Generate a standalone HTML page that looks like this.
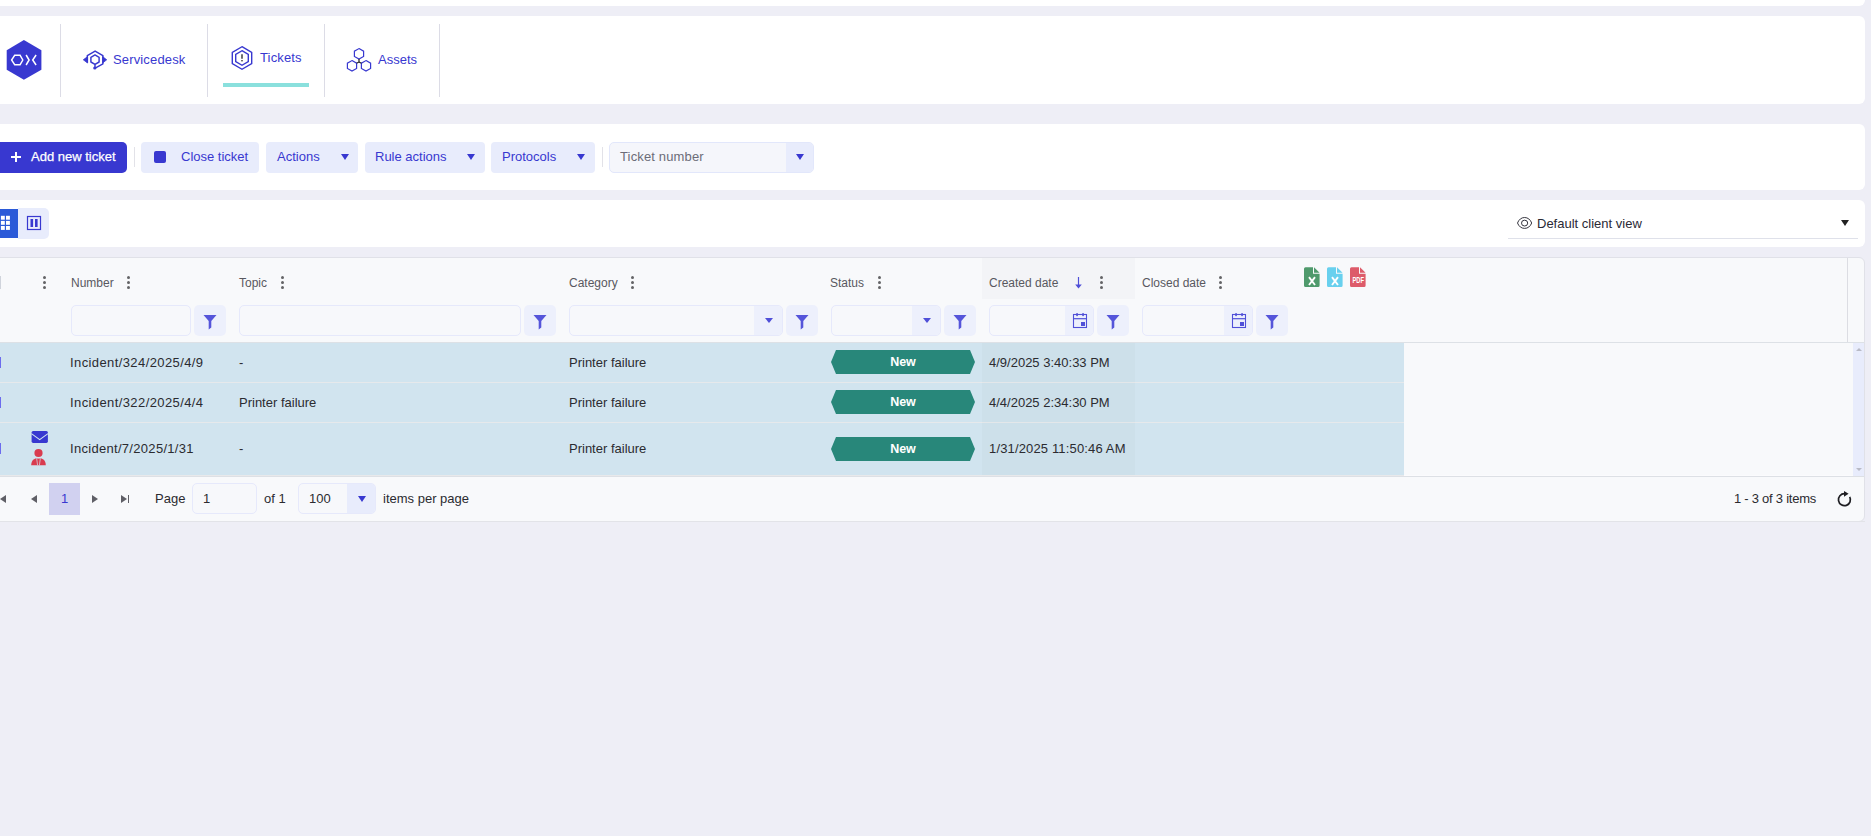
<!DOCTYPE html>
<html><head><meta charset="utf-8">
<style>
*{box-sizing:border-box;margin:0;padding:0}
html,body{width:1871px;height:836px;overflow:hidden;background:#eeeef6;font-family:"Liberation Sans",sans-serif;}
.a{position:absolute}
.card{position:absolute;background:#fff;border-radius:6px}
.t{position:absolute;white-space:nowrap;line-height:1;font-size:13px}
.p{color:#3838d0}
.sep{position:absolute;width:1px;background:#dcdce6}
.btn{position:absolute;background:#e8ecfc;border-radius:4px;height:31px;top:142px}
.arr{position:absolute;width:0;height:0;border-left:4px solid transparent;border-right:4px solid transparent;border-top:6px solid #3838d0}
.kb{position:absolute;width:3px}
.kb i{display:block;width:3px;height:3px;border-radius:50%;background:#636366;margin-bottom:2px}
.h{position:absolute;white-space:nowrap;line-height:1;font-size:12px;color:#58585f}
.inp{position:absolute;top:305px;height:31px;border:1px solid #e6e9fb;border-radius:5px;background:#f7f8fb;overflow:hidden}
.inp .dd{position:absolute;right:0;top:0;bottom:0;background:#edf0fc}
.fb{position:absolute;top:305px;height:31px;width:32px;border-radius:5px;background:#edf0fc}
.row{position:absolute;left:0;width:1404px;background:#d1e4ef}
.c{position:absolute;white-space:nowrap;line-height:1;font-size:13px;color:#2b2b30}
.badge{position:absolute;left:831px;width:144px;height:24px;background:#28877a;clip-path:polygon(5px 0,139px 0,144px 12px,139px 24px,5px 24px,0 12px);color:#fff;font-weight:bold;font-size:12.5px;line-height:24px;text-align:center}
</style></head><body>
<!-- top strip -->
<div class="card" style="left:-10px;top:-10px;width:1875px;height:16px"></div>
<!-- nav card -->
<div class="card" style="left:-10px;top:16px;width:1875px;height:88px"></div>
<svg class="a" style="left:0;top:36px" width="48" height="48" viewBox="0 36 48 48">
  <polygon points="23.9,40.1 41.4,50.2 41.4,69.8 23.9,79.8 6.7,69.8 6.7,50.2" fill="#3838d0"/>
  <polygon points="11.6,60 14.7,55.3 20.1,55.3 22.8,60 20.1,64.7 14.7,64.7" fill="none" stroke="#fff" stroke-width="1.4"/>
  <polyline points="26.1,55 29.1,60 26.1,65" fill="none" stroke="#fff" stroke-width="1.5"/>
  <polyline points="36.1,55 32.7,60 36.1,65" fill="none" stroke="#fff" stroke-width="1.5"/>
</svg>
<div class="sep" style="left:60px;top:24px;height:73px"></div>
<svg class="a" style="left:80px;top:46px" width="30" height="28" viewBox="80 46 30 28" fill="none" stroke="#3838d0" stroke-width="1.45" stroke-linejoin="round">
  <polyline points="87.3,62.6 87.3,55.6 95.1,51.1 102.9,55.6 102.9,63.9 95.2,68.1"/>
  <polygon points="95,54.9 99.1,57.3 99.1,62 95,64.4 90.9,62 90.9,57.3"/>
  <line x1="95" y1="64.4" x2="95" y2="67.4"/>
  <polygon points="83.3,59.8 87.6,56.6 87.6,63" fill="#3838d0" stroke-width="0.8"/>
  <polygon points="106.7,59.8 102.6,56.6 102.6,63" fill="#3838d0" stroke-width="0.8"/>
  <circle cx="94.8" cy="68" r="1.6" fill="#3838d0" stroke="none"/>
</svg>
<div class="t p" style="left:113px;top:53px;letter-spacing:0.15px">Servicedesk</div>
<div class="sep" style="left:207px;top:24px;height:73px"></div>
<svg class="a" style="left:228px;top:44px" width="30" height="30" viewBox="228 44 30 30" fill="none" stroke="#3838d0" stroke-width="1.4">
  <polygon points="242,46.7 251.7,52.3 251.7,63.7 242,69.3 232.3,63.7 232.3,52.3"/>
  <polygon points="242,50.7 248.3,54.35 248.3,61.65 242,65.3 235.7,61.65 235.7,54.35"/>
  <line x1="242" y1="54.3" x2="242" y2="58.8" stroke="#333" stroke-width="1.4"/>
  <rect x="241.3" y="60" width="1.4" height="1.4" fill="#333" stroke="none"/>
</svg>
<div class="t p" style="left:260px;top:51px;letter-spacing:0.15px">Tickets</div>
<div class="a" style="left:223px;top:83px;width:86px;height:4px;background:#8ae0dd"></div>
<div class="sep" style="left:324px;top:24px;height:73px"></div>
<svg class="a" style="left:344px;top:44px" width="32" height="32" viewBox="344 44 32 32" fill="none" stroke="#3838d0" stroke-width="1.2">
  <polygon points="359,48.6 363.6,51.2 363.6,56.4 359,59 354.4,56.4 354.4,51.2"/>
  <polygon points="352,60.6 356.6,63.2 356.6,68.4 352,71 347.4,68.4 347.4,63.2"/>
  <polygon points="366,60.6 370.6,63.2 370.6,68.4 366,71 361.4,68.4 361.4,63.2"/>
  <polyline points="359,59 359,62 356.6,63.2" stroke="#222"/>
  <line x1="359" y1="62" x2="361.4" y2="63.2" stroke="#222"/>
</svg>
<div class="t p" style="left:378px;top:53px">Assets</div>
<div class="sep" style="left:439px;top:24px;height:73px"></div>

<!-- toolbar card -->
<div class="card" style="left:-10px;top:124px;width:1875px;height:66px"></div>
<div class="a" style="left:-6px;top:142px;width:133px;height:31px;background:#3838d0;border-radius:5px"></div>
<svg class="a" style="left:10px;top:151px" width="12" height="12"><path d="M6 1V11M1 6H11" stroke="#fff" stroke-width="2"/></svg>
<div class="t" style="left:31px;top:150px;color:#fff;-webkit-text-stroke:0.25px #fff">Add new ticket</div>
<div class="sep" style="left:134px;top:147px;height:20px;background:#e2e2e8"></div>
<div class="btn" style="left:141px;width:118px"></div>
<div class="a" style="left:154px;top:151px;width:12px;height:12px;background:#3838d0;border-radius:2px"></div>
<div class="t p" style="left:181px;top:150px">Close ticket</div>
<div class="btn" style="left:266px;width:92px"></div>
<div class="t p" style="left:277px;top:150px">Actions</div>
<div class="arr" style="left:341px;top:154px"></div>
<div class="btn" style="left:365px;width:120px"></div>
<div class="t p" style="left:375px;top:150px">Rule actions</div>
<div class="arr" style="left:467px;top:154px"></div>
<div class="btn" style="left:491px;width:104px"></div>
<div class="t p" style="left:502px;top:150px">Protocols</div>
<div class="arr" style="left:577px;top:154px"></div>
<div class="sep" style="left:602px;top:147px;height:20px;background:#e2e2e8"></div>
<div class="a" style="left:609px;top:142px;width:205px;height:31px;border:1px solid #e2e7fb;border-radius:5px;background:#f5f6fb;overflow:hidden">
  <div class="a" style="right:0;top:0;bottom:0;width:27px;background:#e8ecfc"></div>
</div>
<div class="t" style="left:620px;top:150px;color:#6c6c78;letter-spacing:0.15px">Ticket number</div>
<div class="arr" style="left:796px;top:154px"></div>

<!-- view card -->
<div class="card" style="left:-10px;top:200px;width:1875px;height:47px"></div>
<div class="a" style="left:-10px;top:209px;width:28px;height:29px;background:#2b5ad8"></div>
<svg class="a" style="left:0;top:214px" width="12" height="18" viewBox="0 214 12 18" fill="#fff">
  <rect x="0.9" y="215.8" width="3.9" height="3.9"/><rect x="6" y="215.8" width="3.9" height="3.9"/>
  <rect x="0.9" y="220.9" width="3.9" height="3.9"/><rect x="6" y="220.9" width="3.9" height="3.9"/>
  <rect x="0.9" y="226" width="3.9" height="3.9"/><rect x="6" y="226" width="3.9" height="3.9"/>
</svg>
<div class="a" style="left:18px;top:208px;width:31px;height:31px;background:#e8ecfc;border-radius:0 5px 5px 0"></div>
<svg class="a" style="left:26px;top:215px" width="16" height="16">
  <rect x="1.5" y="1.5" width="13" height="13" fill="none" stroke="#3838d0" stroke-width="1.2"/>
  <rect x="4.5" y="4" width="2.6" height="8" fill="#3838d0"/><rect x="9" y="4" width="2.6" height="8" fill="#3838d0"/>
</svg>
<svg class="a" style="left:1514px;top:214px" width="22" height="18" viewBox="1514 214 22 18">
  <path d="M1517.5 223C1518.8 219.6 1521.4 217.5 1524.6 217.5S1530.4 219.6 1531.7 223C1530.4 226.4 1527.8 228.4 1524.6 228.4S1518.8 226.4 1517.5 223Z" fill="none" stroke="#2a2a35" stroke-width="0.95"/>
  <ellipse cx="1524.6" cy="223.1" rx="3.1" ry="2.9" fill="none" stroke="#2a2a35" stroke-width="0.95"/>
</svg>
<div class="t" style="left:1537px;top:217px;color:#2a2a35">Default client view</div>
<div class="arr" style="left:1841px;top:220px;border-top-color:#222"></div>
<div class="a" style="left:1508px;top:238px;width:350px;height:1px;background:#dfe1ea"></div>

<!-- table -->
<div class="a" style="left:-10px;top:257px;width:1875px;height:265px;background:#f8f9fb;border:1px solid #e0e1e8;border-radius:6px;overflow:hidden"></div>
<!-- header -->
<div class="a" style="left:982px;top:258px;width:153px;height:41px;background:#f3f4f7"></div>
<div class="a" style="left:0;top:276px;width:1px;height:13px;background:#d0d4dc"></div>
<div class="kb" style="left:43px;top:276px"><i></i><i></i><i></i></div>
<div class="h" style="left:71px;top:277px">Number</div>
<div class="kb" style="left:127px;top:276px"><i></i><i></i><i></i></div>
<div class="h" style="left:239px;top:277px">Topic</div>
<div class="kb" style="left:281px;top:276px"><i></i><i></i><i></i></div>
<div class="h" style="left:569px;top:277px">Category</div>
<div class="kb" style="left:631px;top:276px"><i></i><i></i><i></i></div>
<div class="h" style="left:830px;top:277px">Status</div>
<div class="kb" style="left:878px;top:276px"><i></i><i></i><i></i></div>
<div class="h" style="left:989px;top:277px">Created date</div>
<svg class="a" style="left:1074px;top:276px" width="10" height="14"><path d="M4.5 1V11" stroke="#4f4fd8" stroke-width="1.2"/><path d="M1.2 8.5L4.5 12.5L7.8 8.5Z" fill="#4f4fd8"/></svg>
<div class="kb" style="left:1100px;top:276px"><i></i><i></i><i></i></div>
<div class="h" style="left:1142px;top:277px">Closed date</div>
<div class="kb" style="left:1219px;top:276px"><i></i><i></i><i></i></div>
<!-- export icons -->
<svg class="a" style="left:1303px;top:266px" width="66" height="23">
  <g fill="#4f9a6c"><path d="M2.5 1.2H10V7.8H16.6V19.5Q16.6 21 15.1 21H2.5Q1 21 1 19.5V2.7Q1 1.2 2.5 1.2Z"/><path d="M11 1.2L16.6 6.8H11Z"/></g>
  <g fill="#68d0ee"><path d="M25.5 1.2H33V7.8H39.6V19.5Q39.6 21 38.1 21H25.5Q24 21 24 19.5V2.7Q24 1.2 25.5 1.2Z"/><path d="M34 1.2L39.6 6.8H34Z"/></g>
  <g fill="#dd5b6a"><path d="M48.5 1.2H56V7.8H62.6V19.5Q62.6 21 61.1 21H48.5Q47 21 47 19.5V2.7Q47 1.2 48.5 1.2Z"/><path d="M57 1.2L62.6 6.8H57Z"/></g>
  <path d="M6 11.2L12 19M12 11.2L6 19" stroke="#fff" stroke-width="1.9"/>
  <path d="M29 11.2L35 19M35 11.2L29 19" stroke="#fff" stroke-width="1.9"/>
  <text x="49.5" y="16.7" font-family="Liberation Sans" font-weight="bold" font-size="8.6" fill="#fff" textLength="11.5" lengthAdjust="spacingAndGlyphs">PDF</text>
</svg>
<div class="a" style="left:1847px;top:258px;width:1px;height:84px;background:#dcdde3"></div>
<!-- filter row -->
<div class="inp" style="left:71px;width:120px"></div>
<div class="fb" style="left:194px"></div>
<div class="inp" style="left:239px;width:282px"></div>
<div class="fb" style="left:524px"></div>
<div class="inp" style="left:569px;width:214px"><div class="dd" style="width:28px"></div></div>
<div class="arr" style="left:765px;top:318px;border-left-width:4px;border-right-width:4px;border-top-width:5px;border-top-color:#4f4fd8"></div>
<div class="fb" style="left:786px"></div>
<div class="inp" style="left:831px;width:110px"><div class="dd" style="width:28px"></div></div>
<div class="arr" style="left:923px;top:318px;border-left-width:4px;border-right-width:4px;border-top-width:5px;border-top-color:#4f4fd8"></div>
<div class="fb" style="left:944px"></div>
<div class="inp" style="left:989px;width:105px"><div class="dd" style="width:28px"></div></div>
<div class="fb" style="left:1097px"></div>
<div class="inp" style="left:1142px;width:111px"><div class="dd" style="width:28px"></div></div>
<div class="fb" style="left:1256px"></div>
<svg class="a" style="left:203px;top:314px" width="14" height="16"><path d="M0.5 1H13.5L8.3 7V13.5L5.7 15.5V7Z" fill="#5555da"/></svg>
<svg class="a" style="left:533px;top:314px" width="14" height="16"><path d="M0.5 1H13.5L8.3 7V13.5L5.7 15.5V7Z" fill="#5555da"/></svg>
<svg class="a" style="left:795px;top:314px" width="14" height="16"><path d="M0.5 1H13.5L8.3 7V13.5L5.7 15.5V7Z" fill="#5555da"/></svg>
<svg class="a" style="left:953px;top:314px" width="14" height="16"><path d="M0.5 1H13.5L8.3 7V13.5L5.7 15.5V7Z" fill="#5555da"/></svg>
<svg class="a" style="left:1106px;top:314px" width="14" height="16"><path d="M0.5 1H13.5L8.3 7V13.5L5.7 15.5V7Z" fill="#5555da"/></svg>
<svg class="a" style="left:1265px;top:314px" width="14" height="16"><path d="M0.5 1H13.5L8.3 7V13.5L5.7 15.5V7Z" fill="#5555da"/></svg>
<svg class="a" style="left:1072px;top:312px" width="16" height="17"><rect x="1.5" y="2.5" width="13" height="13" fill="none" stroke="#5050d8" stroke-width="1.1"/><path d="M1.5 6.7H14.5" stroke="#5050d8" stroke-width="1.2"/><rect x="4.2" y="1" width="1.7" height="3.2" rx="0.8" fill="#5050d8"/><rect x="10.2" y="1" width="1.7" height="3.2" rx="0.8" fill="#5050d8"/><rect x="9" y="10" width="4" height="4" fill="#5050d8"/></svg>
<svg class="a" style="left:1231px;top:312px" width="16" height="17"><rect x="1.5" y="2.5" width="13" height="13" fill="none" stroke="#5050d8" stroke-width="1.1"/><path d="M1.5 6.7H14.5" stroke="#5050d8" stroke-width="1.2"/><rect x="4.2" y="1" width="1.7" height="3.2" rx="0.8" fill="#5050d8"/><rect x="10.2" y="1" width="1.7" height="3.2" rx="0.8" fill="#5050d8"/><rect x="9" y="10" width="4" height="4" fill="#5050d8"/></svg>

<div class="a" style="left:0;top:342px;width:1864px;height:1px;background:#dde1e6"></div>
<!-- rows -->
<div class="row" style="top:343px;height:39px"></div>
<div class="a" style="left:0;top:382px;width:1404px;height:1px;background:#e6e9ec"></div>
<div class="row" style="top:383px;height:39px"></div>
<div class="a" style="left:0;top:422px;width:1404px;height:1px;background:#e6e9ec"></div>
<div class="row" style="top:423px;height:52px"></div>
<div class="a" style="left:982px;top:343px;width:153px;height:132px;background:#cde0ea"></div>
<div class="a" style="left:982px;top:382px;width:153px;height:1px;background:#e3e7ea"></div>
<div class="a" style="left:982px;top:422px;width:153px;height:1px;background:#e3e7ea"></div>
<div class="a" style="left:1853px;top:343px;width:11px;height:133px;background:#e8ecfc"></div>
<div class="a" style="left:1856px;top:348px;width:0;height:0;border-left:3px solid transparent;border-right:3px solid transparent;border-bottom:3px solid #b8bac6"></div>
<div class="a" style="left:1856px;top:468px;width:0;height:0;border-left:3px solid transparent;border-right:3px solid transparent;border-top:3px solid #b8bac6"></div>
<div class="a" style="left:0;top:357px;width:1px;height:11px;background:#6c6cee"></div>
<div class="a" style="left:0;top:397px;width:1px;height:11px;background:#6c6cee"></div>
<div class="a" style="left:0;top:443px;width:1px;height:11px;background:#6c6cee"></div>
<div class="c" style="left:70px;top:356px;letter-spacing:0.4px">Incident/324/2025/4/9</div>
<div class="c" style="left:239px;top:356px">-</div>
<div class="c" style="left:569px;top:356px">Printer failure</div>
<div class="badge" style="top:350px">New</div>
<div class="c" style="left:989px;top:356px">4/9/2025 3:40:33 PM</div>
<div class="c" style="left:70px;top:396px;letter-spacing:0.4px">Incident/322/2025/4/4</div>
<div class="c" style="left:239px;top:396px">Printer failure</div>
<div class="c" style="left:569px;top:396px">Printer failure</div>
<div class="badge" style="top:390px">New</div>
<div class="c" style="left:989px;top:396px">4/4/2025 2:34:30 PM</div>
<svg class="a" style="left:28px;top:428px" width="22" height="40" viewBox="28 428 22 40">
  <rect x="31.6" y="431" width="16.3" height="11.9" rx="1.6" fill="#3838d0"/>
  <path d="M31.4 433.6L39.7 439.6L48 433.6" fill="none" stroke="#d1e4ef" stroke-width="1.1"/>
  <circle cx="38.5" cy="453" r="4.1" fill="#d93b4f"/>
  <path d="M31.2 465.2C31.2 461 33.6 458.6 36.6 458.2H40.4C43.4 458.6 45.8 461 45.8 465.2Z" fill="#d93b4f"/>
  <path d="M36.6 458.2L37.6 465.2M40.4 458.2L39.4 465.2" stroke="#d1e4ef" stroke-width="0.7" fill="none"/>
  <path d="M37.2 458.4H39.8" stroke="#d1e4ef" stroke-width="0.5"/>
</svg>
<div class="c" style="left:70px;top:442px;letter-spacing:0.3px">Incident/7/2025/1/31</div>
<div class="c" style="left:239px;top:442px">-</div>
<div class="c" style="left:569px;top:442px">Printer failure</div>
<div class="badge" style="top:437px">New</div>
<div class="c" style="left:989px;top:442px;letter-spacing:0.15px">1/31/2025 11:50:46 AM</div>
<!-- pager -->
<div class="a" style="left:0;top:475px;width:1404px;height:1px;background:#e8e9eb"></div><div class="a" style="left:1404px;top:475px;width:449px;height:1px;background:#fbfbfd"></div><div class="a" style="left:0;top:476px;width:1864px;height:1px;background:#dde0e5"></div>
<div class="a" style="left:0;top:521px;width:1865px;height:1px;background:#e2e3e8"></div>
<div class="a" style="left:0;top:495px;width:0;height:0;border-top:4px solid transparent;border-bottom:4px solid transparent;border-right:6px solid #5f5f66"></div>
<div class="a" style="left:31px;top:495px;width:0;height:0;border-top:4px solid transparent;border-bottom:4px solid transparent;border-right:6px solid #5f5f66"></div>
<div class="a" style="left:49px;top:483px;width:31px;height:32px;background:#d1d1f0"></div>
<div class="c" style="left:61px;top:492px;color:#3838d0">1</div>
<div class="a" style="left:92px;top:495px;width:0;height:0;border-top:4px solid transparent;border-bottom:4px solid transparent;border-left:6px solid #5f5f66"></div>
<div class="a" style="left:121px;top:495px;width:0;height:0;border-top:4px solid transparent;border-bottom:4px solid transparent;border-left:6px solid #5f5f66"></div>
<div class="a" style="left:128px;top:495px;width:1px;height:8px;background:#5f5f66"></div>
<div class="c" style="left:155px;top:492px">Page</div>
<div class="a" style="left:192px;top:483px;width:65px;height:31px;border:1px solid #e6e9fb;border-radius:5px;background:#f7f8fb"></div>
<div class="c" style="left:203px;top:492px">1</div>
<div class="c" style="left:264px;top:492px">of 1</div>
<div class="a" style="left:298px;top:483px;width:78px;height:31px;border:1px solid #e6e9fb;border-radius:5px;background:#f7f8fb;overflow:hidden"><div class="a" style="right:0;top:0;bottom:0;width:28px;background:#e8ecfc"></div></div>
<div class="c" style="left:309px;top:492px">100</div>
<div class="arr" style="left:358px;top:496px;border-top-width:6px"></div>
<div class="c" style="left:383px;top:492px">items per page</div>
<div class="c" style="left:1734px;top:492px;letter-spacing:-0.25px">1 - 3 of 3 items</div>
<svg class="a" style="left:1835px;top:490px" width="18" height="18"><path d="M9.5 3.7A6 6 0 1 0 14.7 6.8" fill="none" stroke="#1e1e22" stroke-width="1.7"/><path d="M9 1.1L13.6 3.8L9 6.8Z" fill="#1e1e22"/></svg>
</body></html>
